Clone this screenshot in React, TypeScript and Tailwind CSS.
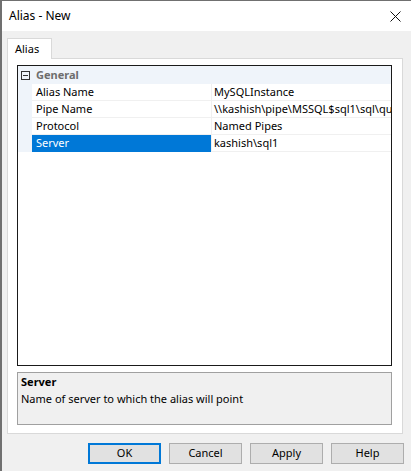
// App.tsx

import React from 'react';

interface PropertyRow {
  name: string;
  value: string;
  selected?: boolean;
}

const rows: PropertyRow[] = [
  {name: 'Alias Name', value: 'MySQLInstance'},
  {name: 'Pipe Name', value: '\\\\kashish\\pipe\\MSSQL$sql1\\sql\\query'},
  {name: 'Protocol', value: 'Named Pipes'},
  {name: 'Server', value: 'kashish\\sql1', selected: true},
];

const buttons = ['OK', 'Cancel', 'Apply', 'Help'];

function App() {
  return (
    <div
      className="flex h-[471px] w-[411px] flex-col overflow-hidden border-l-2 border-t border-[#707070] bg-[#f0f0f0] text-[11px] text-black"
      style={{fontFamily: '"Noto Sans", "Open Sans", sans-serif'}}
    >
      {/* Title bar */}
      <div className="flex h-[30px] shrink-0 items-center justify-between bg-white pl-[7px] pr-[9px]">
        <span className="text-[12px]">Alias - New</span>
        <svg width="11" height="11" viewBox="0 0 11 11" className="mr-px">
          <path d="M0.5 0.5 L10.5 10.5 M10.5 0.5 L0.5 10.5" stroke="#111" strokeWidth="1" />
        </svg>
      </div>

      {/* Tab strip */}
      <div className="flex pl-[5px] pt-[7px]">
        <div className="relative z-10 -mb-px flex h-[21px] w-[45px] items-center border border-b-0 border-[#d9d9d9] bg-white pl-[7px]">
          Alias
        </div>
      </div>

      {/* Tab panel */}
      <div className="ml-[5px] flex h-[376px] w-[396px] flex-col border border-[#d9d9d9] bg-white pl-[9px] pt-[6px]">
        {/* Property grid */}
        <div className="flex h-[301px] w-[375px] flex-col border border-[#1a1a1a] bg-white">
          {/* Category */}
          <div className="flex h-[18px] items-center bg-[#eff4fa]">
            <div className="flex w-[14px] justify-center">
              <div className="flex h-[9px] w-[9px] items-center justify-center border border-[#333]">
                <div className="h-px w-[5px] bg-[#333]" />
              </div>
            </div>
            <span className="pl-[4px] font-bold text-[#6d6d6d]">General</span>
          </div>
          {rows.map((row) => (
            <div key={row.name} className="flex h-[17px]">
              <div className="w-[14px] shrink-0 bg-[#eff4fa]" />
              <div
                className={
                  row.selected
                    ? 'flex w-[179px] shrink-0 items-center bg-[#0078d7] pl-[4px] text-white'
                    : 'flex w-[179px] shrink-0 items-center border-b border-[#f0f0f0] pl-[4px]'
                }
              >
                {row.name}
              </div>
              <div className="w-px shrink-0 bg-[#f0f0f0]" />
              <div className="flex flex-1 items-center overflow-hidden whitespace-nowrap border-b border-[#f0f0f0] pl-[2px]">
                {row.value}
              </div>
            </div>
          ))}
        </div>

        {/* Description */}
        <div className="mt-[6px] flex h-[53px] w-[375px] flex-col border border-[#a0a0a0] bg-[#f0f0f0] px-[3px] pt-px">
          <span className="font-bold leading-[16px]">Server</span>
          <span className="leading-[17px]">Name of server to which the alias will point</span>
        </div>
      </div>

      {/* Buttons */}
      <div className="mt-[9px] flex justify-end gap-[8px] pr-[7px]">
        {buttons.map((label) => (
          <button
            key={label}
            type="button"
            className={
              label === 'OK'
                ? 'flex h-[21px] w-[73px] items-center justify-center border-2 border-[#0078d7] bg-[#e1e1e1]'
                : 'flex h-[21px] w-[73px] items-center justify-center border border-[#adadad] bg-[#e1e1e1]'
            }
          >
            {label}
          </button>
        ))}
      </div>
    </div>
  );
}

export default App;
